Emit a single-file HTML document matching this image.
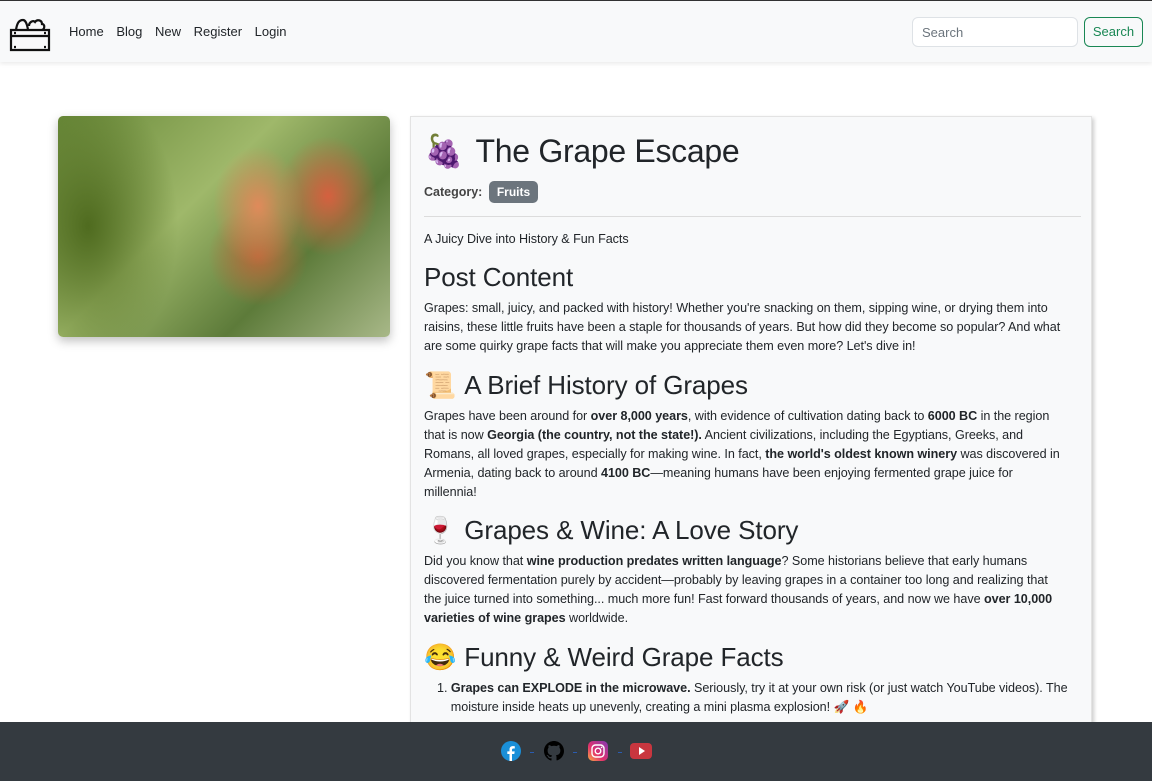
<!DOCTYPE html>
<html><head><meta charset="utf-8"><style>
*{box-sizing:border-box;margin:0;padding:0}
body{width:1152px;height:781px;overflow:hidden;background:#fff;font-family:"Liberation Sans",sans-serif;color:#212529;position:relative}
.top{position:absolute;left:0;top:0;width:1152px;height:1px;background:#333}
nav{position:absolute;left:0;top:1px;width:1152px;height:61px;background:#f8f9fa;box-shadow:0 2px 4px rgba(0,0,0,.08)}
.links{position:absolute;left:69px;top:23px;font-size:13px;color:#212529}
.links span{margin-right:9px}
.search{position:absolute;left:912px;top:16px;width:166px;height:30px;border:1px solid #dee2e6;border-radius:6px;background:#fff;font-size:13px;color:#6c757d;padding:7px 9px}
.btn{position:absolute;left:1084px;top:16px;width:59px;height:30px;border:1px solid #198754;border-radius:6px;color:#198754;font-size:13px;text-align:center;line-height:28px}
.img{position:absolute;left:58px;top:116px;width:332px;height:221px;border-radius:5px;box-shadow:0 4px 10px rgba(0,0,0,.25);overflow:hidden;
background:radial-gradient(ellipse 45px 60px at 200px 90px,#e08a5a,transparent),radial-gradient(ellipse 50px 60px at 270px 80px,#d5603f,transparent),radial-gradient(ellipse 50px 50px at 200px 140px,#b8683a,transparent),radial-gradient(ellipse 90px 140px at 30px 110px,#4f6b1f,transparent),linear-gradient(135deg,#6a8a3a,#9fb86a 40%,#5d7b3a 70%,#a8b888)}
.card{position:absolute;left:410px;top:116px;width:682px;height:620px;background:#f8f9fa;border:1px solid #e3e3e3;box-shadow:2px 2px 4px rgba(0,0,0,.2);padding:0 13px}
.t{position:absolute;left:13px;white-space:nowrap}
h1{font-size:32px;font-weight:normal;letter-spacing:-.3px}
h2{font-size:26px;font-weight:normal;letter-spacing:-.1px}
.e{display:inline-block;margin-right:8px}
p{font-size:12.6px;line-height:19px;letter-spacing:-.05px}
.badge{display:inline-block;background:#6c757d;color:#fff;border-radius:5px;padding:4px 8px;font-size:12px;font-weight:bold;margin-left:3px}
footer{position:absolute;left:0;top:722px;width:1152px;height:59px;background:#343a40}
.ic{position:absolute;top:19px;width:20px;height:20px}
.dash{position:absolute;top:30px;width:4px;height:1px;background:#2a5cb0}
</style></head><body>
<div class="top"></div>
<nav>
<svg style="position:absolute;left:9px;top:14px" width="42" height="38" viewBox="0 0 42 38" fill="none" stroke="#111" stroke-width="2.2">
<path d="M2 15h38v6H2zM2 21h38v14H2z"/><path d="M5 18h2M35 18h2M5 32h2M35 32h2"/>
<path d="M7 15C8 8 10 5 14 5c2 0 4 3 5 10"/><path d="M20 11c0-4 4-6 6-4 2-3 7-2 7 2 3 0 3 5 0 6"/>
</svg>
<div class="links"><span>Home</span> <span>Blog</span> <span>New</span> <span>Register</span> <span>Login</span></div>
<div class="search">Search</div><div class="btn">Search</div>
</nav>
<div class="img"></div>
<div class="card">
<h1 class="t" style="top:15px"><span class="e" style="margin-right:12px">🍇</span>The Grape Escape</h1>
<div class="t" style="top:64px;font-size:12.5px;font-weight:bold;color:#444">Category: <span class="badge">Fruits</span></div>
<div style="position:absolute;left:13px;right:10px;top:99px;height:1px;background:#dcdcdc"></div>
<p class="t" style="top:113px">A Juicy Dive into History &amp; Fun Facts</p>
<h2 class="t" style="top:145px">Post Content</h2>
<p class="t" style="top:182px">Grapes: small, juicy, and packed with history! Whether you're snacking on them, sipping wine, or drying them into<br>raisins, these little fruits have been a staple for thousands of years. But how did they become so popular? And what<br>are some quirky grape facts that will make you appreciate them even more? Let's dive in!</p>
<h2 class="t" style="top:253px"><span class="e">📜</span>A Brief History of Grapes</h2>
<p class="t" style="top:290px">Grapes have been around for <b>over 8,000 years</b>, with evidence of cultivation dating back to <b>6000 BC</b> in the region<br>that is now <b>Georgia (the country, not the state!).</b> Ancient civilizations, including the Egyptians, Greeks, and<br>Romans, all loved grapes, especially for making wine. In fact, <b>the world's oldest known winery</b> was discovered in<br>Armenia, dating back to around <b>4100 BC</b>—meaning humans have been enjoying fermented grape juice for<br>millennia!</p>
<h2 class="t" style="top:398px"><span class="e">🍷</span>Grapes &amp; Wine: A Love Story</h2>
<p class="t" style="top:435px">Did you know that <b>wine production predates written language</b>? Some historians believe that early humans<br>discovered fermentation purely by accident—probably by leaving grapes in a container too long and realizing that<br>the juice turned into something... much more fun! Fast forward thousands of years, and now we have <b>over 10,000<br>varieties of wine grapes</b> worldwide.</p>
<h2 class="t" style="top:525px"><span class="e">😂</span>Funny &amp; Weird Grape Facts</h2>
<p class="t" style="top:562px;left:26px">1. <b>Grapes can EXPLODE in the microwave.</b> Seriously, try it at your own risk (or just watch YouTube videos). The<br>&nbsp;&nbsp;&nbsp;&nbsp;moisture inside heats up unevenly, creating a mini plasma explosion! 🚀 🔥</p>
</div>
<footer>
<svg class="ic" style="left:501px" viewBox="0 0 20 20"><circle cx="10" cy="10" r="10" fill="#1a8fd8"/><path d="M11 20v-7h2.3l.4-2.6H11V8.8c0-.8.3-1.3 1.4-1.3h1.4V5.2c-.3 0-1.100-.1-2-.1-2 0-3.300 1.200-3.300 3.400v1.900H6.300V13h2.200v7z" fill="#fff"/></svg>
<div class="dash" style="left:530px"></div>
<svg class="ic" style="left:544px" viewBox="0 0 16 16"><path fill="#000" d="M8 0C3.6 0 0 3.6 0 8c0 3.5 2.3 6.5 5.5 7.6.4.1.5-.2.5-.4v-1.4c-2.2.5-2.7-1-2.7-1-.4-.9-.9-1.2-.9-1.2-.7-.5.1-.5.1-.5.8.1 1.2.8 1.2.8.7 1.2 1.9.9 2.3.7.1-.5.3-.9.5-1.1-1.8-.2-3.6-.9-3.6-4 0-.9.3-1.6.8-2.1-.1-.2-.4-1 .1-2.1 0 0 .7-.2 2.2.8.6-.2 1.3-.3 2-.3s1.4.1 2 .3c1.5-1 2.2-.8 2.2-.8.4 1.1.2 1.9.1 2.1.5.6.8 1.3.8 2.1 0 3.1-1.9 3.7-3.6 3.9.3.3.5.8.5 1.5v2.2c0 .2.1.5.6.4C13.7 14.5 16 11.5 16 8c0-4.4-3.6-8-8-8z"/></svg>
<div class="dash" style="left:573px"></div>
<svg class="ic" style="left:588px" viewBox="0 0 20 20"><defs><linearGradient id="g" x1="0" y1="1" x2="1" y2="0"><stop offset="0" stop-color="#fcaf45"/><stop offset=".4" stop-color="#e1306c"/><stop offset="1" stop-color="#833ab4"/></linearGradient></defs><rect width="20" height="20" rx="5" fill="url(#g)"/><rect x="4" y="4" width="12" height="12" rx="3.5" fill="none" stroke="#fff" stroke-width="1.4"/><circle cx="10" cy="10" r="2.8" fill="none" stroke="#fff" stroke-width="1.4"/><circle cx="13.6" cy="6.4" r=".8" fill="#fff"/></svg>
<div class="dash" style="left:618px"></div>
<svg class="ic" style="left:630px;width:22px" viewBox="0 0 22 20"><rect x="0" y="2" width="22" height="16" rx="4" fill="#c8363f"/><path d="M9 6v8l6-4z" fill="#fff"/></svg>
</footer>
</body></html>
